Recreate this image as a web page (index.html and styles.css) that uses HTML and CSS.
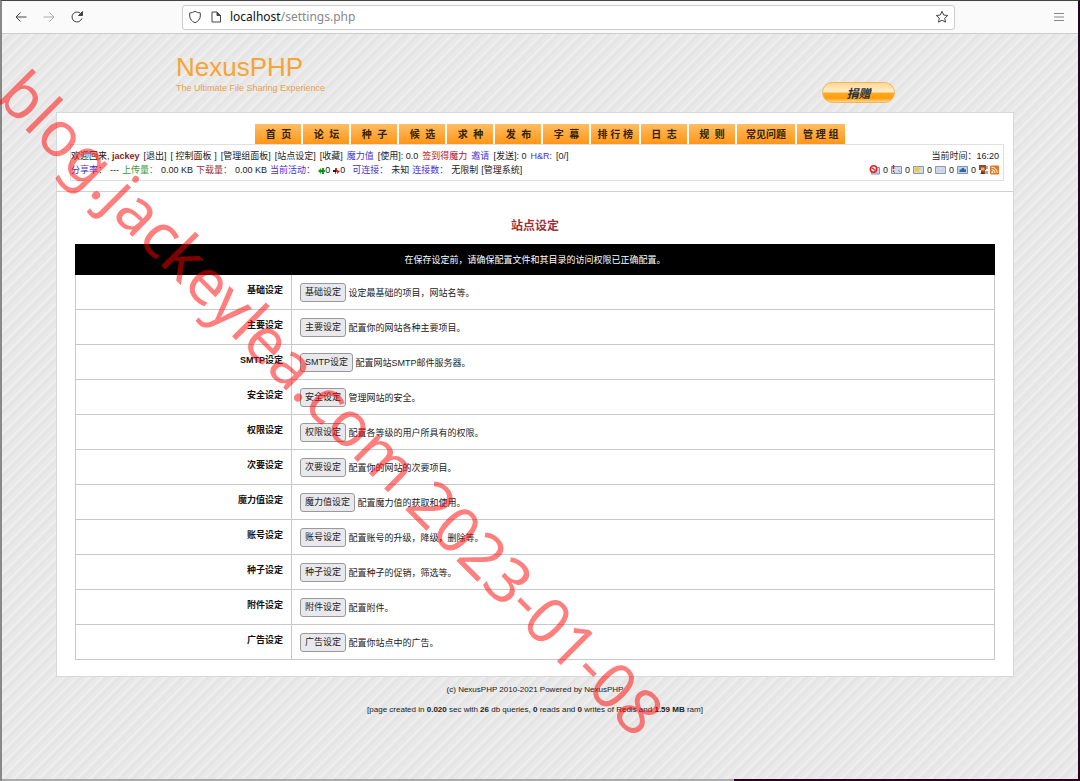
FILE: index.html
```html
<!DOCTYPE html>
<html lang="zh-CN">
<head>
    <meta charset="UTF-8">
    <meta name="viewport" content="width=device-width, initial-scale=1.0">
    <title>NexusPHP :: 站点设定</title>
    <link rel="stylesheet" href="styles.css">
</head>
<body>
<div class="window">

    <!-- Browser toolbar -->
    <div class="toolbar">
        <div class="tool-buttons">
            <button class="tool" type="button" aria-label="Back"><svg width="14" height="14" viewBox="0 0 14 14"><path d="M12.5 7H2M6.5 2.5L2 7l4.500 4.500"/></svg></button>
            <button class="tool faded" type="button" aria-label="Forward"><svg width="14" height="14" viewBox="0 0 14 14"><path d="M1.500 7H12M7.500 2.500L12 7l-4.500 4.500"/></svg></button>
            <button class="tool" type="button" aria-label="Reload"><svg width="14" height="14" viewBox="0 0 14 14"><path d="M11.800 8.500A5 5 0 1 1 10.800 3.700L12 5"/><path d="M12.500 1.500v4h-4z" class="solid"/></svg></button>
        </div>
        <div class="address">
            <svg width="14" height="14" viewBox="0 0 14 14"><path d="M7 1.200C5.500 2.300 3.500 2.800 1.700 2.900V6c0 3 2 5.300 5.300 6.800 3.300-1.500 5.300-3.800 5.300-6.800V2.900C10.500 2.800 8.500 2.300 7 1.200z"/></svg>
            <svg width="14" height="14" viewBox="0 0 14 14"><path d="M3 2h5l3.500 3.500V12H3z"/><path d="M8 2v3.500h3.500z" class="solid"/></svg>
            <span class="url"><b>localhost</b>/settings.php</span>
            <button class="tool" type="button" aria-label="Bookmark"><svg width="14" height="14" viewBox="0 0 14 14"><path d="M7 1.300l1.700 3.700 4 .5-3 2.700.8 4L7 10.200l-3.500 2 .8-4-3-2.700 4-.5z"/></svg></button>
        </div>
        <button class="tool menu" type="button" aria-label="Menu"><svg width="12" height="12" viewBox="0 0 12 12"><path d="M1 2.500h10M1 6h10M1 9.500h10"/></svg></button>
    </div>

    <div class="page">
        <!-- Header -->
        <div class="header">
            <div>
                <h1 class="logo">NexusPHP</h1>
                <div class="slogan">The Ultimate File Sharing Experience</div>
            </div>
            <button class="donate" type="button">捐赠</button>
        </div>

        <div class="container">
            <!-- Main menu -->
            <nav class="nav">
                <a href="#">首&nbsp;&nbsp;页</a>
                <a href="#">论&nbsp;&nbsp;坛</a>
                <a href="#">种&nbsp;&nbsp;子</a>
                <a href="#">候&nbsp;&nbsp;选</a>
                <a href="#">求&nbsp;&nbsp;种</a>
                <a href="#">发&nbsp;&nbsp;布</a>
                <a href="#">字&nbsp;&nbsp;幕</a>
                <a href="#">排&nbsp;行&nbsp;榜</a>
                <a href="#">日&nbsp;&nbsp;志</a>
                <a href="#">规&nbsp;&nbsp;则</a>
                <a href="#" class="wide">常见问题</a>
                <a href="#">管&nbsp;理&nbsp;组</a>
            </nav>

            <!-- User info -->
            <div class="info">
                <div>
                    <div class="info-line">
                        <span>欢迎回来, <a href="#" class="user">jackey</a></span>
                        <span>[<a href="#">退出</a>]</span>
                        <span>[ <a href="#">控制面板</a> ]</span>
                        <span>[<a href="#">管理组面板</a>]</span>
                        <span>[<a href="#">站点设定</a>]</span>
                        <span>[<a href="#">收藏</a>]</span>
                        <span class="blue">魔力值</span>
                        <span>[<a href="#">使用</a>]: 0.0</span>
                        <a href="#" class="red">签到得魔力</a>
                        <span class="blue">邀请</span>
                        <span>[<a href="#">发送</a>]: 0</span>
                        <span class="blue">H&amp;R:</span>
                        <span>[0/]</span>
                    </div>
                    <div class="info-line second">
                        <span class="blue">分享率：</span>
                        <span>---</span>
                        <span class="green">上传量：</span>
                        <span>0.00 KB</span>
                        <span class="brown">下载量：</span>
                        <span>0.00 KB</span>
                        <span class="blue">当前活动：</span>
                        <span class="arrow"><svg width="7" height="8" viewBox="0 0 7 8"><path d="M0 4L3 1v2h1V1h2v2h1v2H6v2H4V5H3v2z" fill="#16a016"/><path d="M3 3h2v2H3z" fill="#073"/></svg>0</span>
                        <span class="arrow"><svg width="7" height="8" viewBox="0 0 7 8"><path d="M7 4L4 7V5H3v2H2V5H0V3h2V1h2v2z" fill="#c22"/><path d="M0 3h3v2H0z" fill="#311"/></svg>0</span>
                        <span class="blue gap">可连接：</span>
                        <span>未知</span>
                        <span class="blue">连接数：</span>
                        <span>无限制</span>
                        <span>[<a href="#">管理系统</a>]</span>
                    </div>
                </div>
                <div class="info-right">
                    <div>当前时间：16:20</div>
                    <div class="mail">
                        <svg width="11" height="10" viewBox="0 0 11 10"><path d="M2.500 2.500h8v6.500h-8z" fill="#c8d2ea" stroke="#8490b4"/><circle cx="4.500" cy="4" r="3.200" fill="#fff" stroke="#d22" stroke-width="1.600"/><path d="M2.500 2.500l4 3" stroke="#d22" stroke-width="1.300"/></svg>
                        <span>0</span>
                        <svg width="11" height="10" viewBox="0 0 11 10"><path d="M.5 1.500h10v7H.5z" fill="#d4dcf0" stroke="#8490b4"/><path d="M3 7.500h1M7 5l2.500 2" stroke="#8490b4"/><path d="M2.500 0v4M2.500 5.500v1.500" stroke="#d11" stroke-width="1.500"/></svg>
                        <span>0</span>
                        <svg width="11" height="10" viewBox="0 0 11 10"><path d="M.5 1.500h10v7H.5z" fill="#d4dcea" stroke="#8490b4"/><path d="M4 0l1 2.500 3 .5-2 2 1 3-3-1.500L1.500 8l.5-3L0 3l3-.5z" fill="#e8cc48"/></svg>
                        <span>0</span>
                        <svg width="11" height="10" viewBox="0 0 11 10"><path d="M.5 1.500h10v7H.5z" fill="#d4dcea" stroke="#8c98b4"/><path d="M1 8l3-3M10 8L7 5M1 2l4.500 4L10 2" fill="none" stroke="#c0c8da"/></svg>
                        <span>0</span>
                        <svg width="11" height="10" viewBox="0 0 11 10"><path d="M.5 1.500h10v7H.5z" fill="#c4d4f0" stroke="#7890bc"/><path d="M2.500 4.500H4l1-1.500h2l.5 1.500H9v2.500H2.500z" fill="#38649c"/></svg>
                        <span>0</span>
                        <svg width="9" height="10" viewBox="0 0 9 10"><path d="M0 0h7v5H6v4H2V5H0z" fill="#9b4a20"/><path d="M2 2.500h3.500v3H2z" fill="#f0b078"/><path d="M7 1h2v3H7zM6 6h3v3H6z" fill="#aaa"/><path d="M1 9l2-2 3 2z" fill="#533"/></svg>
                        <svg width="9" height="10" viewBox="0 0 9 10"><rect y="0.500" width="9" height="9" rx="1" fill="#e67522"/><circle cx="2.300" cy="7.300" r="1" fill="#fff"/><path d="M1.500 4.500a3.500 3.500 0 0 1 3.500 3.500M1.500 2.200a5.800 5.800 0 0 1 5.800 5.800" stroke="#fff" fill="none"/></svg>
                    </div>
                </div>
            </div>

            <!-- Settings -->
            <div class="content">
                <h2>站点设定</h2>
                <table class="settings">
                    <tr><th colspan="2" class="notice">在保存设定前，请确保配置文件和其目录的访问权限已正确配置。</th></tr>
                    <tr><th>基础设定</th><td><button type="button">基础设定</button> 设定最基础的项目，网站名等。</td></tr>
                    <tr><th>主要设定</th><td><button type="button">主要设定</button> 配置你的网站各种主要项目。</td></tr>
                    <tr><th>SMTP设定</th><td><button type="button">SMTP设定</button> 配置网站SMTP邮件服务器。</td></tr>
                    <tr><th>安全设定</th><td><button type="button">安全设定</button> 管理网站的安全。</td></tr>
                    <tr><th>权限设定</th><td><button type="button">权限设定</button> 配置各等级的用户所具有的权限。</td></tr>
                    <tr><th>次要设定</th><td><button type="button">次要设定</button> 配置你的网站的次要项目。</td></tr>
                    <tr><th>魔力值设定</th><td><button type="button">魔力值设定</button> 配置魔力值的获取和使用。</td></tr>
                    <tr><th>账号设定</th><td><button type="button">账号设定</button> 配置账号的升级，降级，删除等。</td></tr>
                    <tr><th>种子设定</th><td><button type="button">种子设定</button> 配置种子的促销，筛选等。</td></tr>
                    <tr><th>附件设定</th><td><button type="button">附件设定</button> 配置附件。</td></tr>
                    <tr><th>广告设定</th><td><button type="button">广告设定</button> 配置你站点中的广告。</td></tr>
                </table>
            </div>
        </div>

        <!-- Footer -->
        <div class="footer">
            <div>(c) <a href="#">NexusPHP</a> 2010-2021 Powered by <a href="#">NexusPHP</a></div>
            <div>[page created in <b>0.020</b> sec with <b>26</b> db queries, <b>0</b> reads and <b>0</b> writes of Redis and <b>1.59 MB</b> ram]</div>
        </div>
    </div>

    <div class="watermark">blog.jackeylea.com 2023-01-08</div>
</div>
</body>
</html>
```
FILE: styles.css
```css
* {
    box-sizing: border-box;
}

body {
    margin: 0;
    background: linear-gradient(to right, #aaa 68%, #2c001e 68%);
    font-family: "Liberation Sans", "Noto Sans CJK SC", sans-serif;
    font-size: 9px;
    line-height: 14px;
    color: #222;
}

a {
    color: inherit;
    text-decoration: none;
}

.window {
    position: relative;
    display: flex;
    flex-direction: column;
    min-height: 100vh;
    border: solid #444;
    border-width: 1px 2px 0;
    border-left-color: #888;
    border-right-color: #2c001e;
    padding-bottom: 2px;
}

/* Browser toolbar */
.toolbar {
    display: flex;
    align-items: center;
    height: 33px;
    padding: 0 13px 0 12px;
    background-color: #fafafa;
    border-bottom: 1px solid #ccc;
}

.tool {
    display: flex;
    padding: 0;
    border: none;
    background: none;
}

.toolbar svg {
    fill: none;
    stroke: #444;
    stroke-width: 1;
}

.toolbar .solid {
    fill: #444;
}

.toolbar .faded svg {
    stroke: #aaa;
}

.tool-buttons {
    display: flex;
    gap: 14px;
    width: 168px;
}

.address {
    display: flex;
    align-items: center;
    gap: 7px;
    width: 773px;
    height: 25px;
    padding: 0 5px;
    border: 1px solid #ccc;
    border-radius: 3px;
    background-color: #fff;
}

.url {
    flex: 1;
    font-family: "Noto Sans", sans-serif;
    font-size: 12px;
    color: #888;
}

.url b {
    font-weight: normal;
    color: #111;
}

.menu {
    margin-left: auto;
}

.toolbar .menu svg {
    stroke: #888;
}

/* Page */
.page {
    flex: 1;
    padding: 0 64px 0 54px;
    background: repeating-linear-gradient(135deg, #e9e9e9 0, #e8e8e8 2px, #f0f0f0 4px, #e9e9e9 5px, #e3e3e3 7px, #e9e9e9 9px);
}

.header {
    display: flex;
    justify-content: space-between;
    align-items: flex-end;
    height: 78px;
    padding: 0 119px 9px 120px;
}

.logo {
    margin: 0;
    font-size: 26px;
    font-weight: normal;
    line-height: 28px;
    color: #f7a433;
}

.slogan {
    margin-bottom: 8px;
    color: #e8a04c;
    line-height: 14px;
}

.donate {
    width: 73px;
    height: 21px;
    padding: 0;
    border: 1px solid #f5b455;
    border-radius: 11px;
    background: linear-gradient(#ffd896, #ffecc8 45%, #ffa91f 55%, #ff9d0a 80%, #ffd890);
    font: italic bold 12px "Liberation Sans", "Noto Sans CJK SC", sans-serif;
    color: #234;
}

.container {
    border: 1px solid #d8d8d8;
    background-color: #fff;
}

.nav {
    display: flex;
    justify-content: center;
    gap: 2px;
    padding: 11px 0 0 30px;
}

.nav a {
    min-width: 46px;
    height: 20px;
    padding: 0 6px;
    background: linear-gradient(#ffbd62, #ff9618);
    color: #332200;
    font-size: 10px;
    font-weight: bold;
    line-height: 22px;
    text-align: center;
    white-space: nowrap;
}

.nav .wide {
    padding: 0 9px;
}

/* User info */
.info {
    display: flex;
    justify-content: space-between;
    margin: 0 9px 10px 13px;
    padding: 4px 4px 3px 0;
    border: 1px solid #e0e0e0;
}

.info-line {
    display: flex;
    gap: 4px;
    white-space: nowrap;
}

.second {
    gap: 3px;
}

.info-right {
    text-align: right;
}

.user {
    font-weight: bold;
    color: #8b1a1a;
}

.blue {
    color: #4a2fd0;
}

.red {
    color: #b01020;
}

.green {
    color: #3a9a3a;
}

.brown {
    color: #99333c;
}

.gap {
    margin-left: 4px;
}

.arrow svg {
    vertical-align: middle;
}

.mail {
    display: flex;
    justify-content: flex-end;
    align-items: center;
    gap: 3px;
}

.mail svg + svg {
    margin-left: -1px;
}

/* Settings */
.content {
    padding: 24px 18px 16px;
    border-top: 1px solid #d0d0d0;
}

h2 {
    margin: 0 0 8px;
    font-size: 12px;
    line-height: 20px;
    text-align: center;
    color: #a03038;
}

.settings {
    width: 100%;
    border-collapse: collapse;
}

.settings th,
.settings td {
    height: 35px;
    padding: 0 8px;
    border: 1px solid #c8c8c8;
    text-align: left;
}

.settings th {
    width: 216px;
    padding-bottom: 4px;
    color: #111;
    text-align: right;
}

.settings .notice {
    height: 30px;
    padding: 0;
    border-color: #000;
    background-color: #000;
    color: #fff;
    font-weight: normal;
    text-align: center;
}

.settings button {
    height: 19px;
    padding: 0 4px;
    border: 1px solid #999;
    border-radius: 3px;
    background-color: #e9e9ed;
    font: inherit;
    color: #222;
}

.footer {
    padding: 6px 0;
    font-size: 8px;
    text-align: center;
}

.footer div {
    margin-bottom: 6px;
}

.watermark {
    position: absolute;
    top: 58px;
    left: 32px;
    font-family: "Noto Sans", sans-serif;
    font-size: 63px;
    line-height: 1;
    white-space: nowrap;
    color: rgba(255, 0, 0, 0.5);
    transform: rotate(45deg);
    transform-origin: 0 0;
    pointer-events: none;
}
```
